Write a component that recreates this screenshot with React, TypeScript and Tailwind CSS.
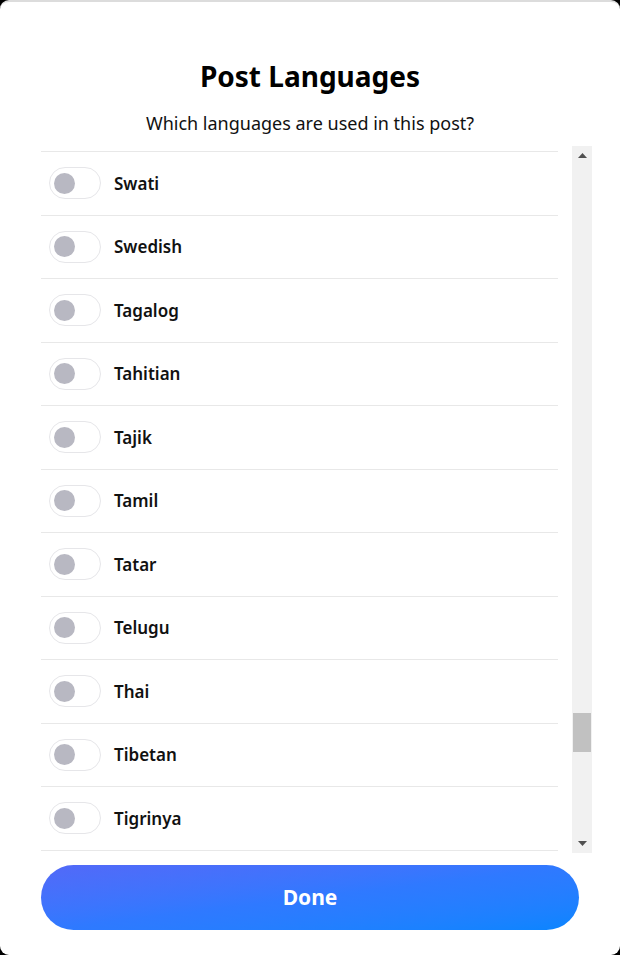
const languages = [
  'Swati',
  'Swedish',
  'Tagalog',
  'Tahitian',
  'Tajik',
  'Tamil',
  'Tatar',
  'Telugu',
  'Thai',
  'Tibetan',
  'Tigrinya',
];

function Toggle() {
  return (
    <div className="w-[52px] h-[32px] rounded-full border border-[#e6e6e9] bg-white flex items-center px-[4px] flex-shrink-0">
      <div className="w-[21px] h-[21px] rounded-full bg-[#b8b8c2]" />
    </div>
  );
}

function FakeScrollbar() {
  return (
    <div className="w-[20px] h-full bg-[#f1f1f1] flex flex-col items-center justify-between py-[7px] flex-shrink-0">
      <svg width="9" height="6" viewBox="0 0 9 6">
        <path d="M4.5 0 L9 5 L0 5 Z" fill="#505050" />
      </svg>
      <div className="flex-1 w-full flex flex-col justify-end pb-[88px] px-[1px]">
        <div className="h-[39px] w-full bg-[#c1c1c1]" />
      </div>
      <svg width="9" height="6" viewBox="0 0 9 6">
        <path d="M0 1 L9 1 L4.5 6 Z" fill="#505050" />
      </svg>
    </div>
  );
}

export default function App() {
  return (
    <div className="w-[620px] h-[955px] bg-black font-['Noto_Sans',sans-serif]">
      <div className="w-full h-full bg-white rounded-[9px] border-t-2 border-[#dcdcdc] flex flex-col">
        <div className="pt-[56px] flex flex-col items-center">
          <h1 className="text-[28px] leading-[36px] font-bold text-black">Post Languages</h1>
          <p className="mt-[17px] text-[18px] leading-[24px] text-[#111]">Which languages are used in this post?</p>
        </div>

        <div className="mt-[11px] ml-[41px] w-[551px] h-[707px] flex gap-[14px]">
          <div className="flex-1 overflow-hidden">
            <div className="h-[6px] border-b border-[#e8e8e8]" />
            {languages.map(name => (
              <div
                key={name}
                className="h-[63.5px] border-b border-[#e8e8e8] flex items-center gap-[13px] pl-[8px]"
              >
                <Toggle />
                <span className="text-[17px] font-semibold text-[#111]">{name}</span>
              </div>
            ))}
          </div>
          <FakeScrollbar />
        </div>

        <div className="px-[41px] pt-[12px]">
          <button className="w-[538px] h-[65px] rounded-full bg-gradient-to-br from-[#5269f8] via-[#2f79ff] to-[#0885ff] text-white text-[21px] font-bold">
            Done
          </button>
        </div>
      </div>
    </div>
  );
}
